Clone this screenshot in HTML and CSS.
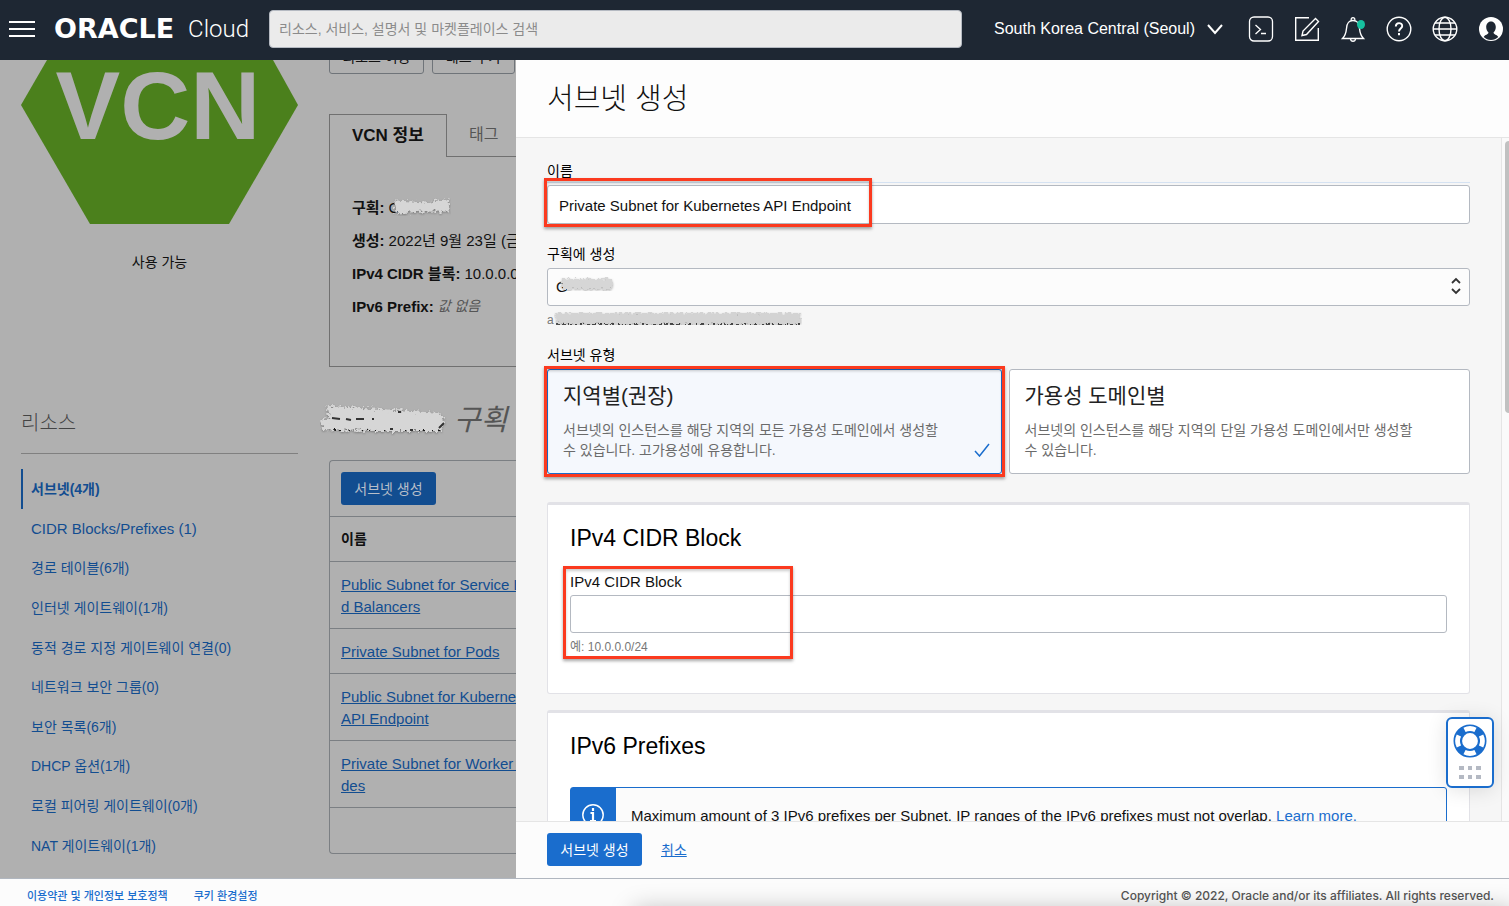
FILE: index.html
```html
<!DOCTYPE html>
<html lang="ko">
<head>
<meta charset="utf-8">
<title>서브넷 생성 - Oracle Cloud</title>
<link rel="stylesheet" href="styles.css">
</head>
<body>
<svg class="defs" width="0" height="0" aria-hidden="true">
  <filter id="rough" x="-10%" y="-30%" width="120%" height="160%">
    <feTurbulence type="fractalNoise" baseFrequency="0.35" numOctaves="2" seed="4" result="n"/>
    <feDisplacementMap in="SourceGraphic" in2="n" scale="9" xChannelSelector="R" yChannelSelector="G"/>
    <feDropShadow dx="0" dy="1" stdDeviation="1" flood-opacity="0.3"/>
  </filter>
</svg>

<header class="topbar">
  <button class="icon-btn" type="button" aria-label="메뉴">
    <svg width="26" height="26" viewBox="0 0 26 26"><path d="M0 6h26M0 13h26M0 20h26" stroke="#fff" stroke-width="2"/></svg>
  </button>
  <a class="logo" href="#"><span class="logo-mark">ORACLE</span><span class="logo-cloud">Cloud</span></a>
  <input class="search" type="search" aria-label="검색" placeholder="리소스, 서비스, 설명서 및 마켓플레이스 검색">
  <button class="region" type="button"><span>South Korea Central (Seoul)</span>
    <svg width="16" height="12" viewBox="0 0 16 12"><path d="M1 2l7 8 7-8" fill="none" stroke="#fff" stroke-width="2"/></svg>
  </button>
  <nav class="tools">
    <button class="icon-btn" type="button" aria-label="Cloud Shell"><svg width="26" height="26" viewBox="0 0 26 26" fill="none" stroke="#fff" stroke-width="1.3"><rect x="1.5" y="1" width="23" height="24" rx="4.5"/><path d="M7.500 9l5 4.500-5 4.500M13 17.500h5"/></svg></button>
    <button class="icon-btn" type="button" aria-label="편집"><svg width="26" height="26" viewBox="0 0 26 26" fill="none" stroke="#fff" stroke-width="1.4"><path d="M15 1.700H1.700v22.600h22.600V12"/><path d="M21.500 2.500l3 3L12.500 18.500 8 19.500 9 15z"/></svg></button>
    <button class="icon-btn" type="button" aria-label="알림"><svg width="26" height="26" viewBox="0 0 26 26" fill="none" stroke="#fff" stroke-width="1.400"><path d="M2.500 22.500h21c-3-3-3.500-5-4-10C19 7 17.500 4.500 13 4.500S7 7 6.500 12.500c-.5 5-1 7-4 10z"/><path d="M11.300 4a1.800 1.800 0 1 1 3.400 0M10.500 23c.5 3 4.500 3 5 0"/><ellipse cx="21" cy="8.500" rx="4" ry="4.500" fill="#16c1a0" stroke="none"/></svg></button>
    <button class="icon-btn" type="button" aria-label="도움말"><svg width="26" height="26" viewBox="0 0 26 26" fill="none" stroke="#fff" stroke-width="1.400"><circle cx="13" cy="13" r="11.800"/><path d="M9.800 10.500c0-4.500 6.400-4.300 6.400-.5 0 2.500-3.200 2.700-3.200 5.500" stroke-width="1.900"/><path d="M13 17v2.200" stroke-width="2"/></svg></button>
    <button class="icon-btn" type="button" aria-label="언어"><svg width="26" height="26" viewBox="0 0 26 26" fill="none" stroke="#fff" stroke-width="1.400"><circle cx="13" cy="13" r="11.800"/><ellipse cx="13" cy="13" rx="6" ry="11.800"/><path d="M1 13h24M3 7h20M3 19h20"/></svg></button>
    <button class="icon-btn" type="button" aria-label="프로필"><svg width="26" height="26" viewBox="0 0 26 26"><circle cx="13" cy="13" r="12" fill="#fff"/><path d="M13 5.500c-3 0-4.800 2.500-4.800 5.500 0 2.500 1 4.300 2.300 5.500-.2 2-3.500 2.200-4.800 4.500C8 23 10 24 13 24s5-1 7.300-3c-1.300-2.300-4.600-2.500-4.800-4.500 1.300-1.200 2.300-3 2.300-5.500 0-3-1.800-5.500-4.800-5.500z" fill="#1e2733"/></svg></button>
  </nav>
</header>

<main class="main">
  <div class="page">
    <aside class="side">
      <svg class="hex" viewBox="0 0 277 164"><path d="M26 0H252L277 45 208 164H69L0 45z" fill="#4b801c"/><text x="137" y="79" text-anchor="middle" class="hex-text">VCN</text></svg>
      <p class="status">사용 가능</p>
      <h2 class="side-title">리소스</h2>
      <ul class="side-nav">
        <li class="current"><a href="#">서브넷(4개)</a></li>
        <li><a class="latin" href="#">CIDR Blocks/Prefixes (1)</a></li>
        <li><a href="#">경로 테이블(6개)</a></li>
        <li><a href="#">인터넷 게이트웨이(1개)</a></li>
        <li><a href="#">동적 경로 지정 게이트웨이 연결(0)</a></li>
        <li><a href="#">네트워크 보안 그룹(0)</a></li>
        <li><a href="#">보안 목록(6개)</a></li>
        <li><a href="#">DHCP 옵션(1개)</a></li>
        <li><a href="#">로컬 피어링 게이트웨이(0개)</a></li>
        <li><a href="#">NAT 게이트웨이(1개)</a></li>
      </ul>
    </aside>
    <section class="detail">
      <div class="actions"><button type="button">리소스 이동</button><button type="button">태그 추가</button></div>
      <div class="tabs"><button class="tab active" type="button">VCN 정보</button><button class="tab" type="button">태그</button></div>
      <div class="panel">
        <p><b>구획:</b> C<svg class="smudge-s" width="60" height="20" viewBox="0 0 60 20"><path d="M4 14h50" stroke="#333" stroke-width="2" stroke-dasharray="3 4" filter="url(#rough)"/><path d="M5 4L35 6 56 3 57 12 30 12 6 14z" fill="#d6d6d6" stroke="#d6d6d6" stroke-width="3" filter="url(#rough)"/></svg></p>
        <p><b>생성:</b> 2022년 9월 23일 (금)</p>
        <p><b>IPv4 CIDR 블록:</b> 10.0.0.0/16</p>
        <p><b>IPv6 Prefix:</b> <i>값 없음</i></p>
      </div>
      <h2 class="heading"><svg width="130" height="36" viewBox="0 0 130 36"><path d="M12 16H116M12 27H122" stroke="#222" stroke-width="4" stroke-dasharray="4 3"/><path d="M9 6L60 9 118 13 122 21 118 27 60 27 4 26 3 20 12 18z" fill="#d6d6d6" stroke="#d6d6d6" stroke-width="4" filter="url(#rough)"/><path d="M12 16l8 1M26 17l5 1M36 17l8 0M52 17h2M78 10h3M70 27h3M90 28h3M119 26l5-5" fill="none" stroke="#333" stroke-width="2"/></svg><i>구획</i></h2>
      <div class="card">
        <div class="card-bar"><button class="primary" type="button">서브넷 생성</button></div>
        <table>
          <thead><tr><th>이름</th></tr></thead>
          <tbody>
            <tr><td><a href="#">Public Subnet for Service Loa<br>d Balancers</a></td></tr>
            <tr><td><a href="#">Private Subnet for Pods</a></td></tr>
            <tr><td><a href="#">Public Subnet for Kubernetes<br>API Endpoint</a></td></tr>
            <tr><td><a href="#">Private Subnet for Worker No<br>des</a></td></tr>
          </tbody>
        </table>
        <div class="card-foot"></div>
      </div>
    </section>
  </div>

  <section class="drawer">
    <header class="drawer-head"><h1>서브넷 생성</h1></header>
    <div class="drawer-body">
      <form class="form">
        <div class="field name-field">
          <label for="name">이름</label>
          <div class="focus-line"><input id="name" class="box" type="text" value="Private Subnet for Kubernetes API Endpoint"></div>
          <span class="mark mark-name"></span>
        </div>
        <div class="field">
          <label for="comp">구획에 생성</label>
          <div class="select-wrap">
            <select id="comp" class="box"><option>G</option></select>
            <svg class="smudge-over" width="64" height="24" viewBox="0 0 64 24"><path d="M10 17h47" stroke="#333" stroke-width="3" stroke-dasharray="5 2" filter="url(#rough)"/><path d="M7 6H56V14H9z" fill="#d6d6d6" stroke="#d6d6d6" stroke-width="2" filter="url(#rough)"/></svg>
            <svg class="arrows" width="10" height="18" viewBox="0 0 10 18"><path d="M1 6l4-4 4 4M1 12l4 4 4-4" fill="none" stroke="#333" stroke-width="1.800"/></svg>
          </div>
          <div class="hint path">a<svg width="248" height="18" viewBox="0 0 248 18"><path d="M2 13H246" stroke="#555" stroke-width="2" stroke-dasharray="4 2" filter="url(#soft)"/><path d="M3 4H244V11H6z" fill="#d3d3d3" stroke="#d3d3d3" stroke-width="4" filter="url(#rough)"/></svg></div>
        </div>
        <fieldset class="field types">
          <legend>서브넷 유형</legend>
          <div class="type-grid">
            <button class="type selected" type="button"><strong>지역별(권장)</strong><span>서브넷의 인스턴스를 해당 지역의 모든 가용성 도메인에서 생성할 수 있습니다. 고가용성에 유용합니다.</span>
              <svg class="check" width="16" height="14" viewBox="0 0 16 14"><path d="M1 8l4.500 5L15 1" fill="none" stroke="#1a6dcd" stroke-width="1.500"/></svg>
              <i class="mark mark-type"></i></button>
            <button class="type" type="button"><strong>가용성 도메인별</strong><span>서브넷의 인스턴스를 해당 지역의 단일 가용성 도메인에서만 생성할 수 있습니다.</span></button>
          </div>
        </fieldset>
        <section class="block">
          <h2>IPv4 CIDR Block</h2>
          <div class="cidr">
            <label for="cidr">IPv4 CIDR Block</label>
            <input id="cidr" class="box" type="text">
            <div class="hint">예: 10.0.0.0/24</div>
            <span class="mark mark-cidr"></span>
          </div>
        </section>
        <section class="block">
          <h2>IPv6 Prefixes</h2>
          <div class="info">
            <div class="info-icon"><svg width="24" height="24" viewBox="0 0 24 24" fill="none" stroke="#fff"><circle cx="12" cy="12" r="10.200" stroke-width="1.500"/><path d="M12 5v3M9.500 10H12v8M9 18h6" stroke-width="2.200"/></svg></div>
            <p>Maximum amount of 3 IPv6 prefixes per Subnet. IP ranges of the IPv6 prefixes must not overlap. <a href="#">Learn more.</a></p>
          </div>
        </section>
      </form>
      <div class="track"><div class="thumb"></div></div>
    </div>
    <footer class="drawer-foot"><button class="primary" type="button">서브넷 생성</button><a href="#">취소</a></footer>
  </section>
  <button class="help" type="button" aria-label="지원">
    <svg width="34" height="34" viewBox="0 0 34 34"><circle cx="17" cy="17" r="12.200" fill="none" stroke="#1a6dcd" stroke-width="8.600"/><g fill="none" stroke="#fff" stroke-width="4.800"><path d="M11.500 5.900a12.400 12.400 0 0 1 11 0M28.100 11.500a12.400 12.400 0 0 1 0 11M22.500 28.100a12.400 12.400 0 0 1-11 0M5.900 22.500a12.400 12.400 0 0 1 0-11"/></g></svg>
    <svg width="22" height="13" viewBox="0 0 22 13" fill="#b4b9c3"><path d="M0 0h5v4H0zM9 0h4v4H9zM17 0h5v4h-5zM0 9h5v4H0zM9 9h4v4H9zM17 9h5v4h-5z"/></svg>
  </button>
</main>

<footer class="bottom"><nav><a href="#">이용약관 및 개인정보 보호정책</a><a href="#">쿠키 환경설정</a></nav><p>Copyright © 2022, Oracle and/or its affiliates. All rights reserved.</p></footer>
</body>
</html>
```
FILE: styles.css
```css
* { box-sizing: border-box; }
body, h1, h2, p, ul, fieldset, legend { margin: 0; padding: 0; border: 0; }
ul { list-style: none; }
button, input, select { font: inherit; color: inherit; margin: 0; }
button { background: none; border: 0; padding: 0; }
svg { display: block; flex: none; }
.defs { position: absolute; }

body {
  height: 100vh;
  display: flex;
  flex-direction: column;
  overflow: hidden;
  font: 14px/20px "Liberation Sans", "Noto Sans CJK KR", sans-serif;
  color: #111;
}

/* top bar */
.topbar {
  flex: none;
  height: 60px;
  display: flex;
  align-items: center;
  padding: 0 5px 2px 9px;
  background: #1e2733;
  color: #fff;
}
.logo {
  display: flex;
  align-items: center;
  justify-content: space-between;
  width: 195px;
  margin: 0 20px 0 19px;
  color: #fff;
  text-decoration: none;
}
.logo-mark { font: bold 27px/30px "DejaVu Sans", sans-serif; }
.logo-cloud { font: 300 24px/30px Roboto, sans-serif; }
.search {
  flex: 1;
  min-width: 0;
  height: 38px;
  padding: 0 9px;
  border: 1px solid #b5bac2;
  border-radius: 4px;
  background: #ebebeb;
}
.search::placeholder { color: #8b8b8b; }
.region {
  display: flex;
  align-items: center;
  justify-content: space-between;
  width: 229px;
  margin: 0 25px 0 32px;
  font-size: 16px;
  white-space: nowrap;
}
.tools { display: flex; gap: 20px; }

/* dimmed page */
.main { flex: 1; min-height: 0; display: flex; position: relative; }
.page {
  flex: none;
  width: 516px;
  display: flex;
  gap: 31px;
  padding-left: 21px;
  overflow: hidden;
  background: #b0b0b0;
  white-space: nowrap;
}
.side { flex: none; width: 277px; }
.hex { width: 100%; }
.hex-text { font: bold 97px "Liberation Sans", sans-serif; fill: #b0b0b0; }
.status { margin-top: 28px; text-align: center; }
.side-title {
  height: 121px;
  margin-top: 61px;
  padding-top: 75px;
  border-bottom: 1px solid #808080;
  font-size: 20px;
  font-weight: 300;
  line-height: 30px;
  color: #444;
}
.side-nav { display: grid; grid-auto-rows: 1fr; height: 396px; margin-top: 15px; }
.side-nav li { display: flex; align-items: center; padding: 1px 0 0 10px; }
.side-nav a { color: #124d90; text-decoration: none; }
.side-nav .latin { font-size: 15px; }
.side-nav .current { padding-left: 8px; border-left: 2px solid #124d90; font-weight: bold; }

.detail { flex: 1; min-width: 0; }
.actions { display: flex; align-items: flex-end; gap: 8px; height: 14px; overflow: hidden; }
.actions button { flex: none; width: 95px; height: 34px; border: 1px solid #6f7479; border-radius: 3px; }
.actions button + button { width: 83px; }
.tabs { display: flex; margin-top: 40px; }
.tab { height: 43px; padding: 0 22px; font-size: 16px; color: #555; }
.tab:last-child { flex: 1; text-align: left; border-bottom: 1px solid #707070; }
.tab.active { border: 1px solid #707070; border-bottom: 0; font-size: 17px; font-weight: bold; color: #111; }
.panel { height: 210px; padding: 34px 0 0 22px; border: solid #707070; border-width: 0 0 1px 1px; font-size: 15px; line-height: 33px; }
.panel p { display: flex; gap: 4px; }
.panel i { font-size: 14px; color: #555; }
.smudge-s { margin: 7px 0 0 -12px; }
.heading { display: flex; align-items: center; gap: 4px; height: 40px; margin: 33px 0 20px -9px; font-size: 29px; font-weight: normal; color: #555; }
.card { border: 1px solid #7b7f83; border-right: 0; border-radius: 4px 0 0 4px; }
.card-bar { padding: 11px; border-bottom: 1px solid #7b7f83; }
.primary { height: 33px; padding: 0 12px; min-width: 95px; border-radius: 3px; background: #1a6dcd; color: #fff; }
.page .primary { background: #124d90; color: #b8bfc9; }
table { width: 100%; border-collapse: collapse; font-size: 15px; line-height: 22px; }
th, td { padding: 11px; text-align: left; border-bottom: 1px solid #7b7f83; }
td { padding: 12px 11px 10px; }
th { font-size: 14px; }
td a { color: #124d90; }
.card-foot { height: 45px; }

/* drawer */
.drawer { flex: 1; min-width: 0; display: flex; flex-direction: column; background: #f6f6f6; }
.drawer-head { flex: none; height: 78px; display: flex; align-items: center; padding: 0 31px; background: #fdfdfd; border-bottom: 1px solid #e5e5e5; }
.drawer-head h1 { font-size: 29px; font-weight: 300; line-height: 40px; }
.drawer-body { flex: 1; min-height: 0; display: flex; overflow: hidden; }
.form { flex: 1; min-width: 0; padding: 23px 31px 0; }
.track { flex: none; width: 8px; padding: 3px 0 0 3px; border-left: 1px solid #e5e5e5; background: #fafafa; }
.thumb { height: 40%; border-radius: 4px 0 0 4px; background: #c1c1c1; }
.field { position: relative; }
.field label, legend { display: block; color: #000; }
.box { display: block; width: 100%; height: 38px; padding: 0 11px; border: 1px solid #b4b9c1; border-radius: 3px; background: #fff; font-size: 15px; }
.name-field { margin-bottom: 20px; }
.name-field .box { height: 39px; padding-top: 2px; }
.focus-line { margin-top: 1px; padding-top: 2px; border-top: 1px solid #d5e2f2; }
.select-wrap { position: relative; margin-top: 4px; }
select.box { appearance: none; padding: 0 8px; background: #fcfcfc; }
.arrows { position: absolute; right: 9px; top: 9px; }
.smudge-over { position: absolute; left: 8px; top: 6px; }
.hint { font-size: 12px; line-height: 18px; color: #777; }
.path { display: flex; margin-top: 5px; }
.types { margin-top: 16px; }
.type-grid { display: grid; grid-template-columns: 65fr 66fr; gap: 7px; margin-top: 4px; }
.type { position: relative; height: 105px; padding: 11px 40px 0 15px; display: flex; flex-direction: column; gap: 9px; text-align: left; border: 1px solid #b4b9c1; border-radius: 3px; background: #fff; color: #6b6b6b; }
.type strong { font-size: 21px; font-weight: normal; line-height: 30px; color: #222; }
.type.selected { padding-right: 46px; border-color: #1a6dcd; background: #f5f8fd; }
.check { position: absolute; right: 11px; bottom: 16px; }
.mark { position: absolute; border: 3px solid #fb3a1f; box-shadow: 0 2px 3px rgba(0,0,0,.35), inset 0 2px 3px rgba(0,0,0,.2); pointer-events: none; }
.mark-name { left: -3px; top: 17px; width: 328px; height: 49px; }
.mark-type { inset: -4px; }
.mark-cidr { left: -7px; top: -6px; width: 230px; height: 93px; }
.block { margin-top: 28px; padding: 18px 22px 37px; border: 1px solid #e2e2e7; border-top-width: 3px; border-radius: 3px; background: #fff; }
.block + .block { margin-top: 16px; }
.block h2 { font-size: 23px; font-weight: normal; line-height: 30px; color: #000; }
.cidr { position: relative; margin-top: 19px; font-size: 15px; }
.cidr .box { margin-top: 3px; }
.cidr .hint { margin-top: 5px; }
.info { display: flex; margin-top: 26px; border: 1px solid #1a6dcd; border-radius: 3px; background: #fbfbfb; font-size: 15px; white-space: nowrap; }
.info-icon { flex: none; width: 45px; padding: 15px 10px; background: #1a6dcd; }
.info p { padding: 18px 15px; }
.info a, .drawer-foot a, .bottom a { color: #1a6dcd; }
.info a { text-decoration: none; }
.drawer-foot { flex: none; height: 57px; display: flex; align-items: center; gap: 19px; padding: 0 31px 1px; border-top: 1px solid #e5e5e5; background: #fcfcfc; }

.help { position: absolute; right: 15px; bottom: 90px; width: 48px; height: 71px; display: flex; flex-direction: column; align-items: center; gap: 8px; padding-top: 5px; border: 2px solid #1a6dcd; border-radius: 6px; background: #fff; box-shadow: 0 2px 20px rgba(0,0,0,.12); }

.bottom { position: relative; flex: none; height: 28px; display: flex; justify-content: space-between; padding: 7px 15px 0 27px; overflow: hidden; border-top: 1px solid #b0b6bf; background: #fcfcfc; font-size: 11px; font-weight: 500; }
.bottom nav { display: flex; gap: 26px; }
.bottom a { text-decoration: none; }
.bottom p { font-family: Inter, sans-serif; font-size: 12px; color: #555; }
.bottom::after { content: ""; position: absolute; left: 640px; right: 0; top: 36px; height: 20px; box-shadow: 0 0 24px 6px rgba(0,0,0,.25); }
```
